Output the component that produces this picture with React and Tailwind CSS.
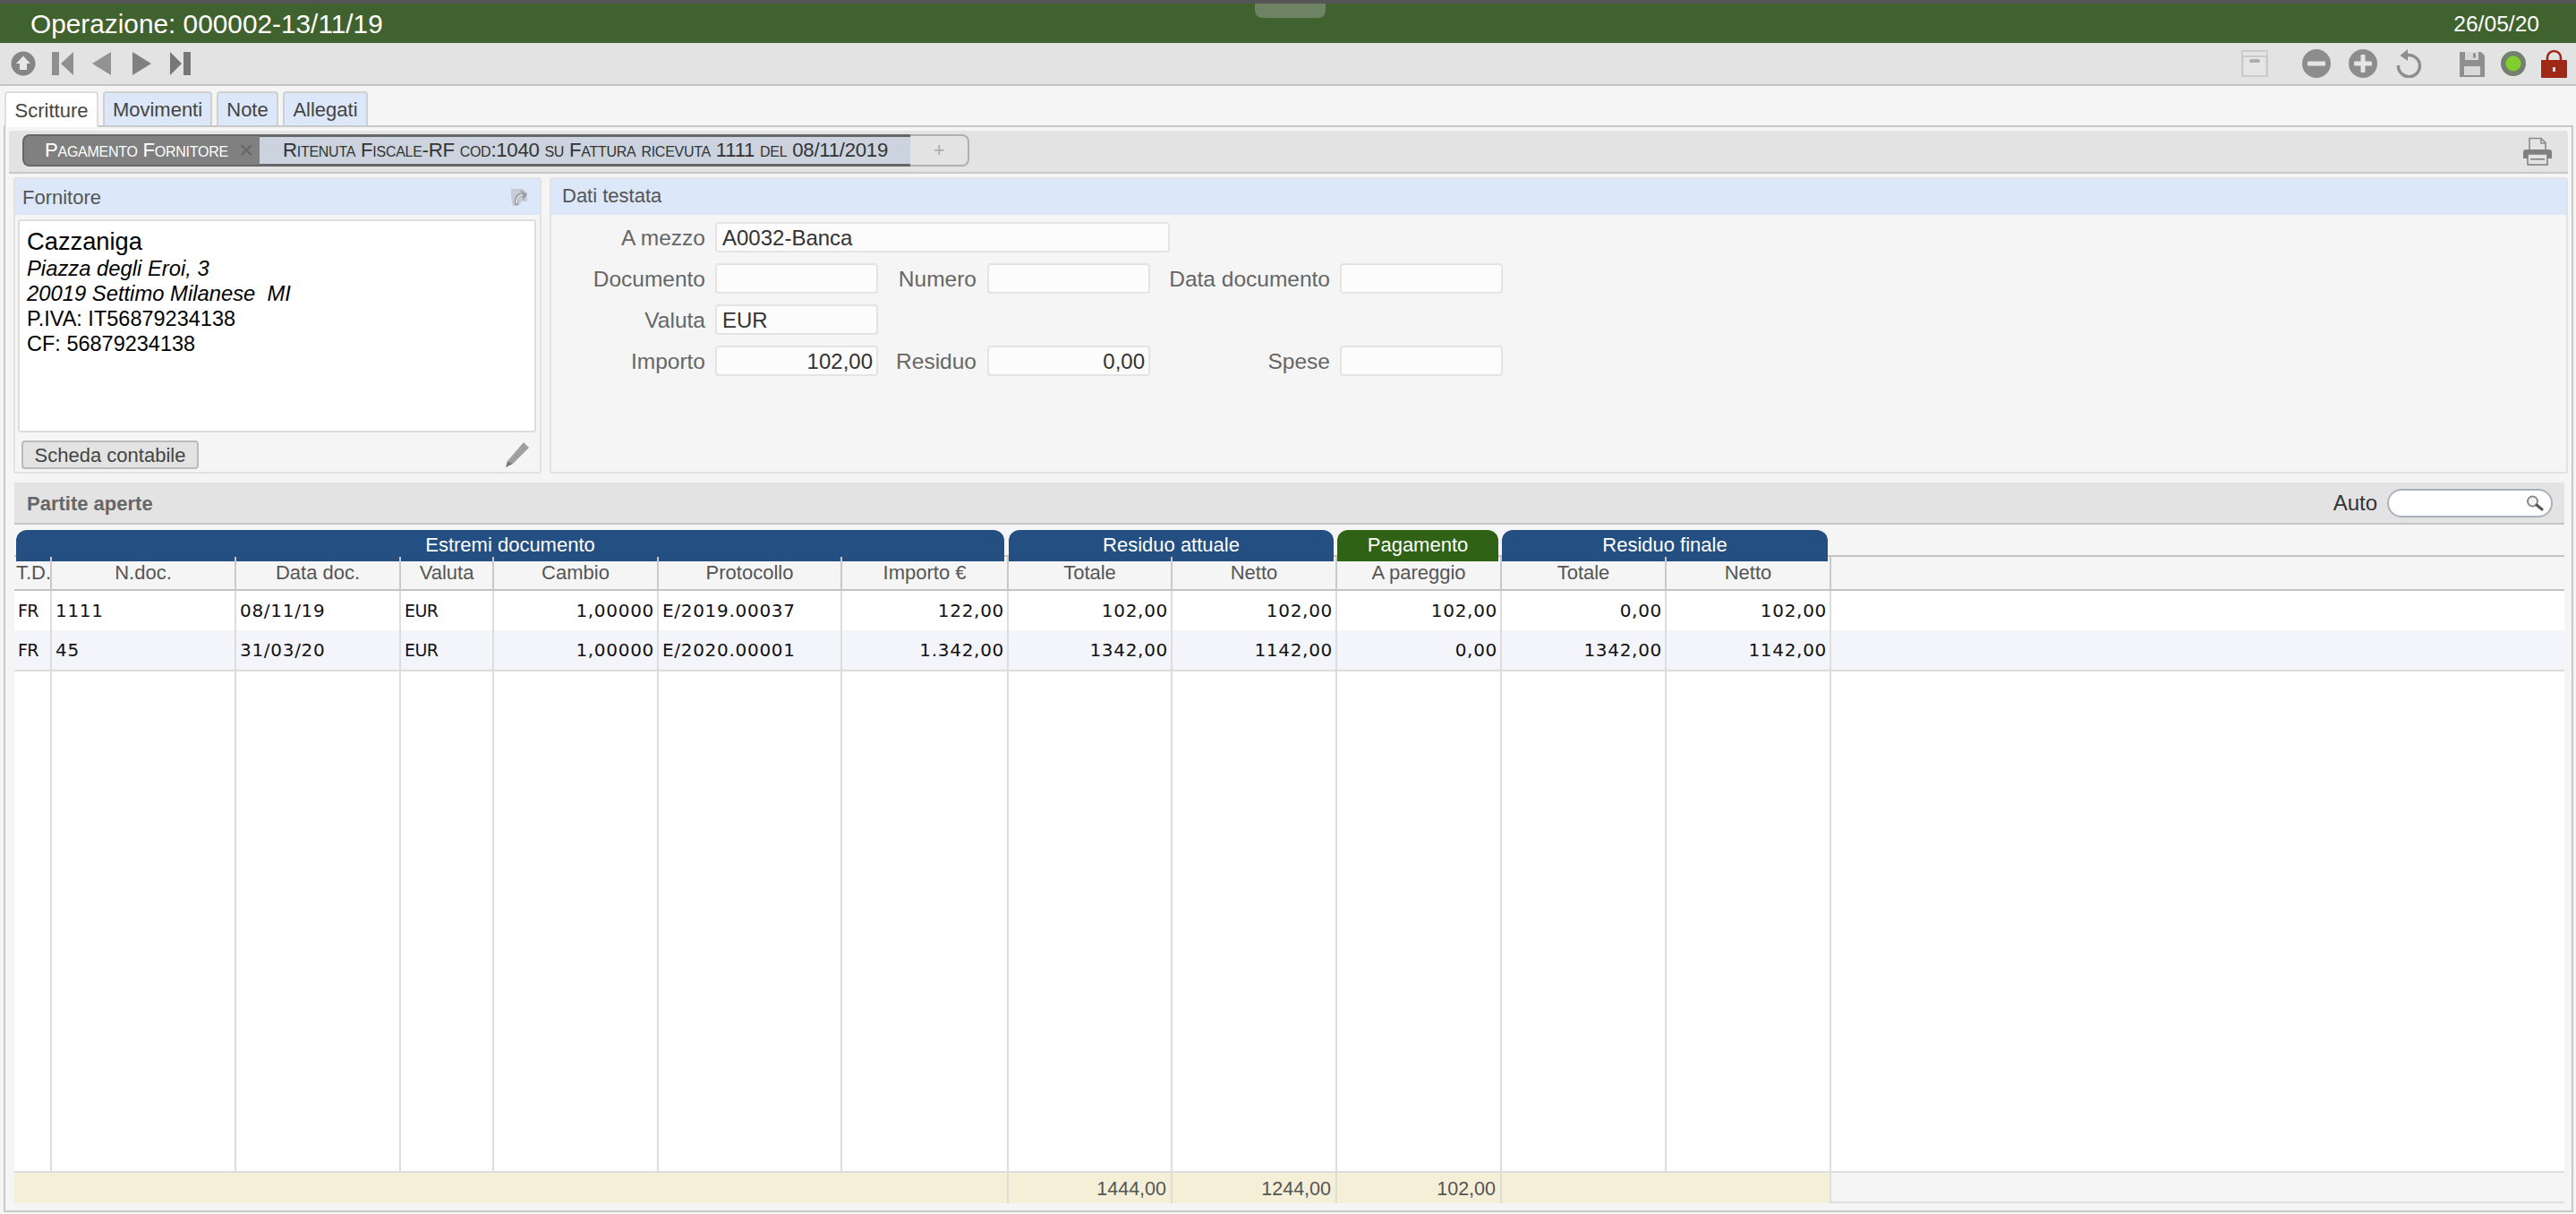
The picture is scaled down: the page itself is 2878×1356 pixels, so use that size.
const tabs = ["Movimenti", "Note", "Allegati"];

const gridCols =
  "grid grid-cols-[42px_206px_184px_104px_184px_205px_186px_183px_184px_184px_184px_184px_1fr]";

const headers = ["T.D.", "N.doc.", "Data doc.", "Valuta", "Cambio", "Protocollo", "Importo €", "Totale", "Netto", "A pareggio", "Totale", "Netto"];

const rows = [
  ["FR", "1111", "08/11/19", "EUR", "1,00000", "E/2019.00037", "122,00", "102,00", "102,00", "102,00", "0,00", "102,00"],
  ["FR", "45", "31/03/20", "EUR", "1,00000", "E/2020.00001", "1.342,00", "1342,00", "1142,00", "0,00", "1342,00", "1142,00"],
];

// columns holding letters are a touch smaller than the figures
function Cell({ value, index }) {
  if (index === 0 || index === 3) {
    return <div className="h-full flex items-center border-r-2 border-[#dddddd] pl-[4px] text-[19px] tracking-[-0.6px]">{value}</div>;
  }
  const right = index === 4 || index >= 6;
  return (
    <div className={`h-full flex items-center border-r-2 border-[#dddddd] text-[20px] tracking-[0.7px] ${right ? "justify-end pr-[3px]" : "pl-[4px]"}`}>
      {value}
    </div>
  );
}

function Field({ label, labelClass, inputClass, value, right }) {
  return (
    <>
      <div className={`h-[34px] text-right text-[24.5px] leading-[36px] text-[#666666] whitespace-nowrap ${labelClass}`}>{label}</div>
      <div className={`h-[34px] bg-[#fcfcfc] border-2 border-[#e4e4e4] rounded-[4px] flex items-center pt-[1px] text-[24px] leading-none text-[#333333] ${right ? "justify-end pr-[4px]" : "pl-[6px]"} ${inputClass}`}>
        {value}
      </div>
    </>
  );
}

function NavIcons() {
  return (
    <div className="flex items-center pl-[12px] blur-[0.4px]">
      <svg width="28" height="28" viewBox="0 0 28 28">
        <circle cx="14" cy="14" r="13.5" fill="#858585" />
        <path d="M14 5.5 L22 14 H18 V21 H10 V14 H6 Z" fill="#e8e8e8" />
      </svg>
      <svg className="ml-[18px]" width="24" height="28" viewBox="0 0 24 28" fill="#8f8f8f">
        <rect x="0" y="1" width="8" height="26" />
        <path d="M24 1 V27 L10 14 Z" />
      </svg>
      <svg className="ml-[21px]" width="21" height="28" viewBox="0 0 21 28" fill="#929292">
        <path d="M21 1 V27 L0 14 Z" />
      </svg>
      <svg className="ml-[24px]" width="21" height="28" viewBox="0 0 21 28" fill="#808080">
        <path d="M0 1 V27 L21 14 Z" />
      </svg>
      <svg className="ml-[21px]" width="23" height="28" viewBox="0 0 23 28" fill="#777777">
        <path d="M0 1 V27 L13 14 Z" />
        <rect x="15" y="1" width="8" height="26" />
      </svg>
    </div>
  );
}

function ActionIcons() {
  return (
    <div className="flex items-center pr-[10px] blur-[0.4px]">
      <svg width="30" height="30" viewBox="0 0 30 30">
        <rect x="0" y="0" width="30" height="30" fill="#cbcbcb" />
        <rect x="1.5" y="2" width="27" height="4" fill="#e4e4e4" />
        <rect x="2.5" y="8" width="25" height="20" fill="#e6e6e6" />
        <rect x="9" y="10" width="12" height="4" rx="2" fill="#aeaeae" />
      </svg>
      <svg className="ml-[38px]" width="32" height="32" viewBox="0 0 32 32">
        <circle cx="16" cy="16" r="16" fill="#8d8d8d" />
        <rect x="6" y="13.5" width="20" height="5" rx="1" fill="#e6e6e6" />
      </svg>
      <svg className="ml-[20px]" width="32" height="32" viewBox="0 0 32 32">
        <circle cx="16" cy="16" r="16" fill="#8d8d8d" />
        <rect x="6" y="13.5" width="20" height="5" rx="1" fill="#e6e6e6" />
        <rect x="13.5" y="6" width="5" height="20" rx="1" fill="#e6e6e6" />
      </svg>
      <svg className="ml-[21px]" width="29" height="32" viewBox="0 0 29 32">
        <path d="M10 7.5 A12 12 0 1 1 2.5 18" fill="none" stroke="#8d8d8d" strokeWidth="3.4" />
        <path d="M13 0 V13 L4.5 7 Z" fill="#8d8d8d" />
      </svg>
      <svg className="ml-[42px]" width="28" height="29" viewBox="0 0 28 29">
        <path d="M0 1 H24 L28 5 V29 H0 Z" fill="#8f8f8f" />
        <rect x="6" y="1" width="15" height="9" fill="#d8d8d8" />
        <rect x="15" y="2.5" width="3" height="5" fill="#8f8f8f" />
        <rect x="5" y="17" width="18" height="10" fill="#d8d8d8" />
      </svg>
      <svg className="ml-[18px]" width="28" height="28" viewBox="0 0 28 28">
        <circle cx="14" cy="14" r="14" fill="#73806f" />
        <circle cx="14" cy="14" r="8.5" fill="#80cf2c" />
      </svg>
      <svg className="ml-[17px]" width="29" height="32" viewBox="0 0 29 32">
        <path d="M7 14 V9.5 A7.5 7.5 0 0 1 22 9.5 V14" fill="none" stroke="#a02817" strokeWidth="2.6" />
        <rect x="0" y="12" width="29" height="20" rx="1" fill="#a02817" />
        <rect x="13" y="20" width="3" height="5" fill="#e6d8d4" />
      </svg>
    </div>
  );
}

export default function App() {
  return (
    <div className="w-[2878px] h-[1356px] overflow-hidden bg-[#f5f5f5] font-['Liberation_Sans',Arial,sans-serif] flex flex-col relative">
      <div className="h-[48px] shrink-0 border-t-4 border-[#555555] bg-[#3f622f] text-white flex items-center justify-between pt-[2px] pl-[34px] pr-[41px]">
        <span className="text-[29.8px] leading-none">Operazione: 000002-13/11/19</span>
        <span className="text-[24.6px] leading-none">26/05/20</span>
      </div>
      <div className="absolute left-[1402px] top-[4px] w-[79px] h-[16px] rounded-b-[8px] bg-[#6e8264]" />

      <div className="h-[48px] shrink-0 bg-[#e3e3e3] border-b-2 border-[#c4c4c4] flex items-center justify-between">
        <NavIcons />
        <ActionIcons />
      </div>

      {/* tab strip */}
      <div className="h-[46px] shrink-0 flex items-end pl-[5px] gap-[5px] relative z-10">
        <div className="h-[40px] w-[105px] bg-white border-2 border-b-0 border-[#dddddd] rounded-t-[4px] flex items-center justify-center text-[22px] text-[#444444]">
          Scritture
        </div>
        {tabs.map((tab, i) => (
          <div
            key={tab}
            className={`h-[38px] mb-[2px] bg-[#dce8f9] border-2 border-b-0 border-[#d0d0d0] rounded-t-[4px] flex items-center justify-center text-[22px] text-[#444444] ${i === 0 ? "w-[122px]" : i === 1 ? "w-[69px]" : "w-[95px]"}`}
          >
            {tab}
          </div>
        ))}
      </div>

      {/* tab body */}
      <div className="ml-[4px] mr-[3px] h-[1214px] shrink-0 border-2 border-[#c8c8c8] -mt-[2px] flex flex-col">
        <div className="mt-[4px] mx-[4px] h-[48px] shrink-0 bg-[#e3e3e3] border-b-2 border-[#c8c8c8] rounded-t-[4px] flex items-center justify-between pl-[15px] pr-[18px]">
          <div className="flex h-[36px] -mt-[2px] items-stretch text-[22.2px] tracking-[-0.27px] [font-variant:small-caps]">
            <div className="w-[265px] bg-[#808080] border-2 border-[#666666] border-r-0 rounded-l-[8px] text-white flex items-center justify-between pl-[23px] pr-[7px]">
              <span>Pagamento Fornitore</span>
              <span className="text-[#666666] text-[28px] leading-none">×</span>
            </div>
            <div className="w-[727px] bg-[#cbd3df] border-y-[3px] border-[#666666] text-[#333333] flex items-center pl-[26px]">
              Ritenuta Fiscale-RF cod:1040 su Fattura ricevuta 1111 del 08/11/2019
            </div>
            <div className="w-[66px] bg-[#e3e3e3] border-2 border-l-0 border-[#b0b0b0] rounded-r-[8px] text-[#aaaaaa] flex items-center justify-center">
              +
            </div>
          </div>
          <svg width="32" height="32" viewBox="0 0 32 32" className="blur-[0.3px]">
            <path d="M7 15 V1.5 H20 L25 6.5 V15" fill="none" stroke="#8a8a8a" strokeWidth="1.6" />
            <path d="M20 1.5 V7 H25" fill="none" stroke="#8a8a8a" strokeWidth="1.6" />
            <path d="M3 14 H29 A3 3 0 0 1 32 17 V24 H0 V17 A3 3 0 0 1 3 14 Z" fill="#808080" />
            <path d="M5 19 H27 V31 H5 Z" fill="#e3e3e3" stroke="#808080" strokeWidth="1.6" />
            <rect x="8" y="24" width="16" height="1.6" fill="#808080" />
          </svg>
        </div>

        <div className="mt-[4px] ml-[9px] mr-[4px] h-[331px] shrink-0 flex gap-[9px]">
          {/* supplier */}
          <div className="w-[590px] shrink-0 border-2 border-[#e2e2e2] rounded-[3px] flex flex-col">
            <div className="h-[40px] shrink-0 bg-[#dce8f9] flex items-center justify-between pl-[8px] pr-[13px] text-[22px] text-[#555555]">
              <span>Fornitore</span>
              <svg width="20" height="22" viewBox="0 0 20 22" className="blur-[0.4px]">
                <path d="M1 2 H14 L19 6 V16 H13 L9 21 H3 C1 14 1 8 1 2 Z" fill="#c6ccd4" />
                <path d="M5 20 C4 11 8 6 13 7 L11 3 L19 8 L14 15 L14 11 C10 10 8 14 9 20 Z" fill="#9a9fa6" />
                <path d="M7 18 C7 12 10 8.5 14 9" fill="none" stroke="#f2f2f2" strokeWidth="1.4" />
              </svg>
            </div>
            <div className="mt-[5px] ml-[3px] mr-[4px] h-[238px] shrink-0 bg-white border-2 border-[#dddddd] rounded-[3px] pt-[7px] pl-[8px] text-black">
              <div className="text-[27.3px] leading-[32px]">Cazzaniga</div>
              <div className="text-[23.8px] leading-[28px] italic">Piazza degli Eroi, 3</div>
              <div className="text-[23.8px] leading-[28px] italic whitespace-pre">20019 Settimo Milanese  MI</div>
              <div className="text-[23.5px] leading-[28px]">P.IVA: IT56879234138</div>
              <div className="text-[23.5px] leading-[28px]">CF: 56879234138</div>
            </div>
            <div className="mt-[9px] pl-[7px] pr-[11px] flex items-center justify-between">
              <button className="h-[32px] w-[198px] bg-[#e3e3e3] border-2 border-[#bbbbbb] rounded-[4px] text-[22px] text-[#444444] flex items-center justify-center">
                Scheda contabile
              </button>
              <svg width="28" height="30" viewBox="0 0 28 30">
                <path d="M21 1 L27 7 L9 25 L3 22 Z" fill="#a0a0a0" />
                <path d="M3 22 L9 25 L1 29 Z" fill="#777777" />
              </svg>
            </div>
          </div>

          {/* header data */}
          <div className="flex-1 border-2 border-[#e2e2e2] rounded-[3px] flex flex-col">
            <div className="h-[40px] shrink-0 bg-[#dce8f9] flex items-center pl-[12px] pb-[3px] text-[22px] text-[#555555]">Dati testata</div>
            <div className="mt-[8px] flex flex-col gap-[12px]">
              <div className="flex items-center">
                <Field label="A mezzo" labelClass="w-[172px] mr-[11px]" inputClass="w-[508px]" value="A0032-Banca" />
              </div>
              <div className="flex items-center">
                <Field label="Documento" labelClass="w-[172px] mr-[11px]" inputClass="w-[182px]" />
                <Field label="Numero" labelClass="w-[110px] mr-[12px]" inputClass="w-[182px]" />
                <Field label="Data documento" labelClass="w-[201px] mr-[11px]" inputClass="w-[182px]" />
              </div>
              <div className="flex items-center">
                <Field label="Valuta" labelClass="w-[172px] mr-[11px]" inputClass="w-[182px]" value="EUR" />
              </div>
              <div className="flex items-center">
                <Field label="Importo" labelClass="w-[172px] mr-[11px]" inputClass="w-[182px]" value="102,00" right />
                <Field label="Residuo" labelClass="w-[110px] mr-[12px]" inputClass="w-[182px]" value="0,00" right />
                <Field label="Spese" labelClass="w-[201px] mr-[11px]" inputClass="w-[182px]" />
              </div>
            </div>
          </div>
        </div>

        {/* open items */}
        <div className="mt-[10px] ml-[10px] mr-[8px] flex-1 flex flex-col">
          <div className="h-[47px] shrink-0 bg-[#e3e3e3] border-b-2 border-[#c4c4c4] flex items-center justify-between pl-[14px] pr-[13px]">
            <span className="text-[22px] font-bold text-[#666666] pt-[2px]">Partite aperte</span>
            <div className="flex items-center">
              <span className="text-[24px] text-[#333333] mr-[11px]">Auto</span>
              <div className="w-[185px] h-[32px] bg-white border-2 border-[#aab0bd] rounded-full flex items-center justify-end pr-[8px]">
                <svg width="20" height="18" viewBox="0 0 20 18">
                  <circle cx="7.5" cy="7" r="5.5" fill="#f4f4f4" stroke="#8a8a8a" strokeWidth="2" />
                  <path d="M12 11 L18 16" stroke="#555555" strokeWidth="3" strokeLinecap="round" />
                </svg>
              </div>
            </div>
          </div>

          <div className={`${gridCols} mt-[6px] h-[30px] shrink-0 border-b-2 border-[#c4c4c4] text-[22px] text-white`}>
            <div className="col-span-7 ml-[2px] mr-[5px] pb-[2px] bg-[#244f82] rounded-t-[12px] flex items-center justify-center">Estremi documento</div>
            <div className="col-span-2 mr-[4px] pb-[2px] bg-[#244f82] rounded-t-[12px] flex items-center justify-center">Residuo attuale</div>
            <div className="mr-[4px] pb-[2px] bg-[#2f6215] rounded-t-[12px] flex items-center justify-center">Pagamento</div>
            <div className="col-span-2 mr-[4px] pb-[2px] bg-[#244f82] rounded-t-[12px] flex items-center justify-center">Residuo finale</div>
          </div>

          <div className={`${gridCols} h-[38px] shrink-0 border-b-2 border-[#c4c4c4] text-[22px] text-[#555555]`}>
            {headers.map((h, i) => (
              <div key={i} className={`pb-[2px] border-r-2 border-[#c9c9c9] flex items-center whitespace-nowrap overflow-hidden ${i === 0 ? "pl-[2px]" : "justify-center"}`}>
                {h}
              </div>
            ))}
          </div>

          <div className="font-['DejaVu_Sans',sans-serif] text-[#111111]">
            {rows.map((row, r) => (
              <div key={r} className={`${gridCols} h-[44px] ${r === 1 ? "bg-[#f4f5fa]" : "bg-white"}`}>
                {row.map((value, i) => (
                  <Cell key={i} value={value} index={i} />
                ))}
              </div>
            ))}
          </div>

          <div className={`${gridCols} flex-1 bg-white border-t-2 border-[#dddddd]`}>
            {headers.map((_, i) => (
              <div key={i} className="border-r-2 border-[#dddddd]" />
            ))}
          </div>

          <div className={`${gridCols} h-[36px] shrink-0 border-t-2 border-b-[2px] border-[#dddddd] text-[21.5px] text-[#555555]`}>
            <div className="col-span-7 bg-[#f6efd8] border-r-2 border-[#dddddd]" />
            <div className="bg-[#f6efd8] border-r-2 border-[#dddddd] flex items-center justify-end pr-[5px] pt-[2px]">1444,00</div>
            <div className="bg-[#f6efd8] border-r-2 border-[#dddddd] flex items-center justify-end pr-[5px] pt-[2px]">1244,00</div>
            <div className="bg-[#f6efd8] border-r-2 border-[#dddddd] flex items-center justify-end pr-[5px] pt-[2px]">102,00</div>
            <div className="col-span-2 bg-[#f6efd8] border-r-2 border-[#dddddd]" />
          </div>
          <div className="h-[8px] shrink-0" />
        </div>
      </div>
    </div>
  );
}
